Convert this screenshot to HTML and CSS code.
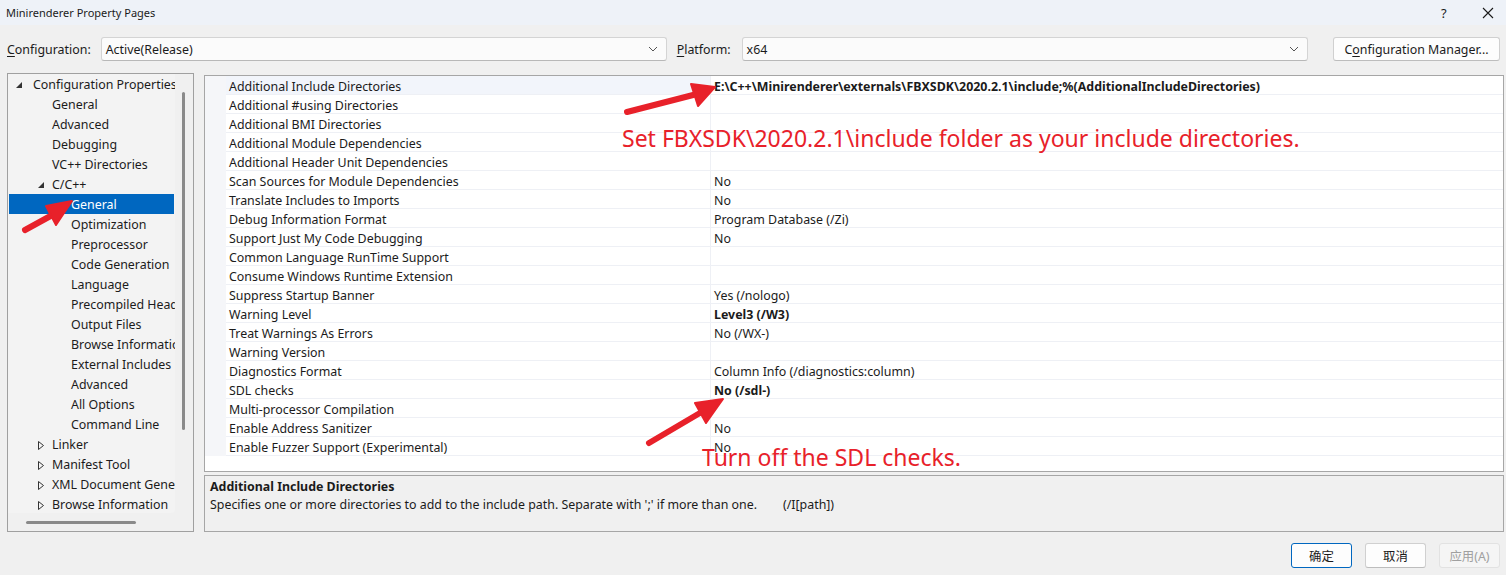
FILE: index.html
```html
<!DOCTYPE html>
<html>
<head>
<meta charset="utf-8">
<title>Minirenderer Property Pages</title>
<link rel="stylesheet" href="styles.css">
</head>
<body>
<div class="window">
  <div class="titlebar">
    <span class="title">Minirenderer Property Pages</span>
    <span class="help">?</span>
    <svg class="close" width="12" height="12" viewBox="0 0 12 12"><path d="M1 1 L11 11 M11 1 L1 11" stroke="#1a1a1a" stroke-width="1.1" fill="none"/></svg>
  </div>

  <div class="config-row">
    <span class="lbl"><u>C</u>onfiguration:</span>
    <div class="combo cfg-combo">
      <span>Active(Release)</span>
      <svg class="chev" width="10" height="6" viewBox="0 0 10 6"><path d="M1 1 L5 5 L9 1" stroke="#555" stroke-width="1" fill="none"/></svg>
    </div>
    <span class="lbl plat-lbl"><u>P</u>latform:</span>
    <div class="combo plat-combo">
      <span>x64</span>
      <svg class="chev" width="10" height="6" viewBox="0 0 10 6"><path d="M1 1 L5 5 L9 1" stroke="#555" stroke-width="1" fill="none"/></svg>
    </div>
    <button class="btn mgr">C<u>o</u>nfiguration Manager...</button>
  </div>

  <div class="main">
    <div class="tree">
      <div class="tree-content">
        <div class="node l0"><svg class="tri" width="6" height="6" viewBox="0 0 6 6"><path d="M6 0 L6 6 L0 6 Z" fill="#333"/></svg>Configuration Properties</div>
        <div class="node l1">General</div>
        <div class="node l1">Advanced</div>
        <div class="node l1">Debugging</div>
        <div class="node l1">VC++ Directories</div>
        <div class="node l1 exp"><svg class="tri" width="6" height="6" viewBox="0 0 6 6"><path d="M6 0 L6 6 L0 6 Z" fill="#333"/></svg>C/C++</div>
        <div class="node l2 selected">General</div>
        <div class="node l2">Optimization</div>
        <div class="node l2">Preprocessor</div>
        <div class="node l2">Code Generation</div>
        <div class="node l2">Language</div>
        <div class="node l2">Precompiled Headers</div>
        <div class="node l2">Output Files</div>
        <div class="node l2">Browse Information</div>
        <div class="node l2">External Includes</div>
        <div class="node l2">Advanced</div>
        <div class="node l2">All Options</div>
        <div class="node l2">Command Line</div>
        <div class="node l1 col"><svg class="tri" width="6" height="9" viewBox="0 0 6 9"><path d="M0.5 0.5 L5.5 4.5 L0.5 8.5 Z" fill="none" stroke="#333" stroke-width="1"/></svg>Linker</div>
        <div class="node l1 col"><svg class="tri" width="6" height="9" viewBox="0 0 6 9"><path d="M0.5 0.5 L5.5 4.5 L0.5 8.5 Z" fill="none" stroke="#333" stroke-width="1"/></svg>Manifest Tool</div>
        <div class="node l1 col"><svg class="tri" width="6" height="9" viewBox="0 0 6 9"><path d="M0.5 0.5 L5.5 4.5 L0.5 8.5 Z" fill="none" stroke="#333" stroke-width="1"/></svg>XML Document Generator</div>
        <div class="node l1 col"><svg class="tri" width="6" height="9" viewBox="0 0 6 9"><path d="M0.5 0.5 L5.5 4.5 L0.5 8.5 Z" fill="none" stroke="#333" stroke-width="1"/></svg>Browse Information</div>
      </div>
      <div class="vscroll"><div class="vthumb"></div></div>
      <div class="hscroll"><div class="hthumb"></div></div>
      <div class="corner"></div>
    </div>

    <div class="right">
      <div class="grid">
        <div class="prow sel"><div class="gut"></div><div class="pname">Additional Include Directories</div><div class="pval b">E:\C++\Minirenderer\externals\FBXSDK\2020.2.1\include;%(AdditionalIncludeDirectories)</div></div>
        <div class="prow"><div class="gut"></div><div class="pname">Additional #using Directories</div><div class="pval"></div></div>
        <div class="prow"><div class="gut"></div><div class="pname">Additional BMI Directories</div><div class="pval"></div></div>
        <div class="prow"><div class="gut"></div><div class="pname">Additional Module Dependencies</div><div class="pval"></div></div>
        <div class="prow"><div class="gut"></div><div class="pname">Additional Header Unit Dependencies</div><div class="pval"></div></div>
        <div class="prow"><div class="gut"></div><div class="pname">Scan Sources for Module Dependencies</div><div class="pval">No</div></div>
        <div class="prow"><div class="gut"></div><div class="pname">Translate Includes to Imports</div><div class="pval">No</div></div>
        <div class="prow"><div class="gut"></div><div class="pname">Debug Information Format</div><div class="pval">Program Database (/Zi)</div></div>
        <div class="prow"><div class="gut"></div><div class="pname">Support Just My Code Debugging</div><div class="pval">No</div></div>
        <div class="prow"><div class="gut"></div><div class="pname">Common Language RunTime Support</div><div class="pval"></div></div>
        <div class="prow"><div class="gut"></div><div class="pname">Consume Windows Runtime Extension</div><div class="pval"></div></div>
        <div class="prow"><div class="gut"></div><div class="pname">Suppress Startup Banner</div><div class="pval">Yes (/nologo)</div></div>
        <div class="prow"><div class="gut"></div><div class="pname">Warning Level</div><div class="pval b">Level3 (/W3)</div></div>
        <div class="prow"><div class="gut"></div><div class="pname">Treat Warnings As Errors</div><div class="pval">No (/WX-)</div></div>
        <div class="prow"><div class="gut"></div><div class="pname">Warning Version</div><div class="pval"></div></div>
        <div class="prow"><div class="gut"></div><div class="pname">Diagnostics Format</div><div class="pval">Column Info (/diagnostics:column)</div></div>
        <div class="prow"><div class="gut"></div><div class="pname">SDL checks</div><div class="pval b">No (/sdl-)</div></div>
        <div class="prow"><div class="gut"></div><div class="pname">Multi-processor Compilation</div><div class="pval"></div></div>
        <div class="prow"><div class="gut"></div><div class="pname">Enable Address Sanitizer</div><div class="pval">No</div></div>
        <div class="prow"><div class="gut"></div><div class="pname">Enable Fuzzer Support (Experimental)</div><div class="pval">No</div></div>
      </div>
      <div class="desc">
        <div class="desc-title">Additional Include Directories</div>
        <div class="desc-text"><span>Specifies one or more directories to add to the include path. Separate with ';' if more than one.</span><span class="switch">(/I[path])</span></div>
      </div>
    </div>
  </div>

  <div class="footer">
    <button class="btn dlg ok">确定</button>
    <button class="btn dlg">取消</button>
    <button class="btn dlg disabled">应用(A)</button>
  </div>
</div>

<svg class="annot" width="1506" height="575" viewBox="0 0 1506 575">
  <g fill="#e8212a" stroke="#e8212a" stroke-linecap="round" stroke-linejoin="round">
    <line x1="627" y1="112" x2="697" y2="94" stroke-width="6"/>
    <path d="M715 87 L691 84 L698 106 Z" stroke-width="2"/>
    <line x1="25" y1="230" x2="56" y2="213" stroke-width="6"/>
    <path d="M72 201 L46 206 L56 225 Z" stroke-width="2"/>
    <line x1="649" y1="443" x2="705" y2="410" stroke-width="6"/>
    <path d="M723 399 L695 403 L706 423 Z" stroke-width="2"/>
  </g>
</svg>
<div class="note note1">Set FBXSDK\2020.2.1\include folder as your include directories.</div>
<div class="note note2">Turn off the SDL checks.</div>
</body>
</html>
```

FILE: styles.css
```css
* { box-sizing: border-box; }
html, body {
  margin: 0;
  padding: 0;
}
body {
  width: 1506px;
  height: 575px;
  background: #f0f0f0;
  font-family: "Noto Sans", "Noto Sans CJK SC", sans-serif;
  font-size: 12.4px;
  color: #1b1b1b;
  position: relative;
  overflow: hidden;
}
.window {
  display: flex;
  flex-direction: column;
}
.titlebar {
  height: 25px;
  background: #eef2f8;
  display: flex;
  align-items: center;
  padding: 0 0 0 6px;
  font-size: 11px;
}
.title { flex: 1; }
.help { width: 14px; margin-right: 27px; font-size: 13px; }
.close { margin-right: 12px; }

.config-row {
  display: flex;
  align-items: center;
  height: 24px;
  margin-top: 12px;
  padding-left: 7px;
}
.lbl { white-space: nowrap; }
.lbl u, .btn u { text-decoration: underline; text-underline-offset: 2px; }
.config-row > .cfg-combo { margin-left: 10px; width: 566px; }
.plat-lbl { margin-left: 10px; }
.plat-combo { margin-left: 11px; width: 566px; }
.combo {
  height: 24px;
  background: #fbfbfb;
  border: 1px solid #d4d4d4;
  border-bottom-color: #b8b8b8;
  border-radius: 3px;
  display: flex;
  align-items: center;
  justify-content: space-between;
  padding: 0 8px 0 4px;
}
.btn {
  font-family: inherit;
  font-size: 12.4px;
  color: #1b1b1b;
  background: #fdfdfd;
  border: 1px solid #d0d0d0;
  border-bottom-color: #bdbdbd;
  border-radius: 3px;
  padding: 0;
  height: 24px;
}
.mgr { margin-left: auto; margin-right: 6px; width: 167px; }

.main {
  display: flex;
  margin-top: 12px;
  padding-left: 7px;
  gap: 10px;
}
.tree {
  width: 187px;
  height: 459px;
  border: 1px solid #a0a0a0;
  display: grid;
  grid-template-columns: 167px 18px;
  grid-template-rows: 439px 18px;
  background: #f0f0f0;
}
.tree-content {
  background: #f3f3f3;
  overflow: hidden;
  border-bottom-right-radius: 4px;
  padding: 0 1px;
}
.node {
  height: 20px;
  padding-top: 2px;
  line-height: 18px;
  white-space: nowrap;
  display: flex;
  align-items: center;
  position: relative;
}
.node.l0 { padding-left: 24px; }
.node.l1 { padding-left: 43px; }
.node.l2 { padding-left: 62px; }
.node .tri { position: absolute; }
.node.l0 .tri { left: 7px; top: 8px; }
.node.l1.exp .tri { left: 29px; top: 8px; }
.node.l1.col .tri { left: 29px; top: 7px; }
.node.selected { background: #0067c0; color: #fff; }
.vscroll { background: #f0f0f0; position: relative; }
.vthumb {
  margin: 18px 0 0 7px;
  width: 3px;
  height: 338px;
  background: #8a8a8a;
  border-radius: 2px;
}
.hscroll { background: #f0f0f0; }
.hthumb {
  margin: 8px 0 0 18px;
  width: 110px;
  height: 3px;
  background: #8a8a8a;
  border-radius: 2px;
}
.corner { background: #f0f0f0; }

.right {
  width: 1300px;
  padding-top: 2px;
  display: flex;
  flex-direction: column;
}
.grid {
  height: 397px;
  background: #fff;
  border: 1px solid #a6a6a6;
}
.prow {
  display: flex;
  height: 19px;
}
.gut { width: 21px; background: #f5f6f9; flex: none; }
.pname, .pval {
  border-bottom: 1px solid #eef0f5;
  padding-top: 3px;
  line-height: 15px;
  white-space: nowrap;
  overflow: hidden;
}
.pname {
  width: 485px;
  flex: none;
  padding-left: 3px;
  border-right: 1px solid #eef0f5;
}
.pval { flex: 1; padding-left: 3px; }
.prow.sel .pname { background: #f2f5fb; }
.b { font-weight: bold; }

.desc {
  margin-top: 3px;
  height: 57px;
  border: 1px solid #a6a6a6;
  background: #f0f0f0;
  padding: 2px 5px;
}
.desc-title { font-weight: bold; line-height: 18px; }
.desc-text { line-height: 18px; display: flex; gap: 26px; }

.footer {
  display: flex;
  justify-content: flex-end;
  gap: 13px;
  margin-top: 11px;
  padding-right: 6px;
}
.dlg { width: 61px; height: 25px; }
.ok { border: 1px solid #0067c0; }
.disabled { color: #a0a0a0; background: #f5f5f5; border-color: #e2e2e2; }

.annot {
  position: absolute;
  left: 0;
  top: 0;
  pointer-events: none;
}
.note {
  position: absolute;
  color: #e8212a;
  font-family: "Noto Sans", sans-serif;
  font-size: 23px;
  line-height: 23px;
  white-space: nowrap;
}
.note1 { left: 622px; top: 127px; }
.note2 { left: 702px; top: 446px; }
```
